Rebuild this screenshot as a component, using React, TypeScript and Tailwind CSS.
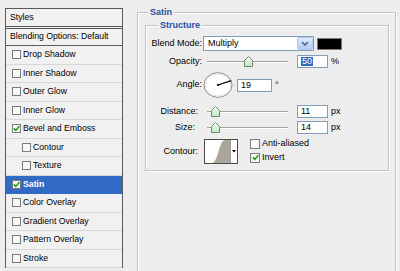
import React from 'react';

type Item = { label: string; checked?: boolean; indent?: boolean; selected?: boolean };

const items: Item[] = [
  { label: 'Drop Shadow' },
  { label: 'Inner Shadow' },
  { label: 'Outer Glow' },
  { label: 'Inner Glow' },
  { label: 'Bevel and Emboss', checked: true },
  { label: 'Contour', indent: true },
  { label: 'Texture', indent: true },
  { label: 'Satin', checked: true, selected: true },
  { label: 'Color Overlay' },
  { label: 'Gradient Overlay' },
  { label: 'Pattern Overlay' },
  { label: 'Stroke' },
];

function Check({ on, size = 'w-[9px] h-[9px]' }: { on?: boolean; size?: string }) {
  return (
    <span className={`${size} shrink-0 border border-[#7b7b7b] bg-[#f8f8f8] flex items-center justify-center`}>
      {on && (
        <svg width="7" height="7" viewBox="0 0 7 7">
          <path d="M0.8 3.4 L2.8 5.4 L6.3 1.2" fill="none" stroke="#1f9a1f" strokeWidth="1.6" />
        </svg>
      )}
    </span>
  );
}

function Thumb() {
  return (
    <svg width="9" height="11" viewBox="0 0 9 11">
      <defs>
        <linearGradient id="th" x1="0" y1="0" x2="0" y2="1">
          <stop offset="0" stopColor="#ffffff" />
          <stop offset="1" stopColor="#bfe6bf" />
        </linearGradient>
      </defs>
      <polygon points="0.5,4.5 4.5,0.5 8.5,4.5 8.5,10.5 0.5,10.5" fill="url(#th)" stroke="#6e8a6e" />
    </svg>
  );
}

function Track({ thumb }: { thumb: string }) {
  return (
    <div className="relative w-[81px] h-[13px] ml-[5px]">
      <div className="absolute left-0 right-0 top-[6px] h-[2px] border-t border-[#a4a4a4] bg-white" />
      <div className={`absolute top-[1px] ${thumb}`}>
        <Thumb />
      </div>
    </div>
  );
}

function Field({ children, w = 'w-[31px]' }: { children: React.ReactNode; w?: string }) {
  return (
    <div className={`${w} h-[13px] border border-[#7f9db9] bg-white flex items-center pl-[3px] leading-none`}>
      {children}
    </div>
  );
}

export default function App() {
  return (
    <div className="w-[400px] h-[271px] overflow-hidden bg-[#ededed] flex items-start font-['Liberation_Sans',Arial,sans-serif] text-black">
      {/* styles list */}
      <div className="ml-[5px] mt-[8px] w-[118px] flex flex-col border-x border-[#5a5a5a] bg-[#f1f1f1] text-[8.7px]">
        <div className="h-[19px] border-y border-[#5a5a5a] flex items-center pl-[4px]">Styles</div>
        <div className="mt-[1px] h-[18px] border-y border-[#5a5a5a] flex items-center pl-[4px]">
          Blending Options: Default
        </div>
        {items.map((it) => (
          <div
            key={it.label}
            className={`h-[18.5px] border-b flex items-center ${
              it.selected ? 'bg-[#316ac5] border-[#316ac5] text-white font-bold' : 'border-[#d7d7d7]'
            } ${it.indent ? 'pl-[16px]' : 'pl-[6px]'}`}
          >
            <Check on={it.checked} />
            <span className="ml-[2px]">{it.label}</span>
          </div>
        ))}
      </div>

      {/* Satin group */}
      <div className="relative ml-[14px] mt-[12px] w-[259px] h-[280px] border border-[#c2c2c2] shadow-[inset_1px_1px_0_#fff,1px_1px_0_#fff]">
        <span className="absolute left-[10px] top-[-7px] px-[2px] bg-[#ededed] text-[9px] leading-[12px] font-bold text-[#1f4fa3]">
          Satin
        </span>

        {/* Structure group */}
        <div className="relative ml-[7px] mt-[12px] w-[244px] h-[146px] border border-[#c2c2c2] shadow-[inset_1px_1px_0_#fff,1px_1px_0_#fff] text-[9px]">
          <span className="absolute left-[12px] top-[-7px] px-[2px] bg-[#ededed] text-[9px] leading-[12px] font-bold text-[#1f4fa3]">
            Structure
          </span>

          <div className="flex flex-col">
            {/* blend mode */}
            <div className="mt-[10px] h-[15px] flex items-center">
              <span className="w-[56px] text-right">Blend Mode:</span>
              <div className="ml-[1px] w-[111px] h-[15px] border border-[#7f9db9] bg-white flex items-center">
                <span className="flex-1 pl-[4px]">Multiply</span>
                <div className="w-[16px] h-[13px] rounded-[2px] border border-[#b3c6f0] bg-linear-to-b from-[#e0e9fd] to-[#b4c9f5] flex items-center justify-center">
                  <svg width="8" height="5" viewBox="0 0 8 5">
                    <path d="M1 1 L4 4 L7 1" fill="none" stroke="#4c5f86" strokeWidth="1.6" />
                  </svg>
                </div>
              </div>
              <div className="ml-[3px] w-[25px] h-[12px] bg-black border border-[#7a7a7a]" />
            </div>

            {/* opacity */}
            <div className="mt-[4px] h-[13px] flex items-center">
              <span className="w-[56px] text-right">Opacity:</span>
              <Track thumb="left-[37px]" />
              <div className="ml-[9px]">
                <Field>
                  <span className="bg-[#316ac5] text-white px-[1px]">50</span>
                </Field>
              </div>
              <span className="ml-[3px]">%</span>
            </div>

            {/* angle */}
            <div className="mt-[4px] h-[26px] flex items-center">
              <span className="w-[56px] text-right">Angle:</span>
              <svg className="ml-[1px]" width="30" height="26" viewBox="0 0 30 26">
                <ellipse cx="15" cy="13" rx="14" ry="12.3" fill="#ffffff" stroke="#8d8d8d" />
                <ellipse cx="15" cy="13" rx="12.8" ry="11.1" fill="none" stroke="#e4e4e4" />
                <line x1="15" y1="13" x2="28.2" y2="8.6" stroke="#000" strokeWidth="1.3" />
                <circle cx="15" cy="13" r="1.1" fill="#000" />
              </svg>
              <div className="ml-[4px]">
                <Field w="w-[35px]">19</Field>
              </div>
              <span className="ml-[3px] mt-[1px]">°</span>
            </div>

            {/* distance */}
            <div className="mt-[7px] h-[13px] flex items-center">
              <span className="w-[56px] text-right pr-[4px]">Distance:</span>
              <Track thumb="left-[4px]" />
              <div className="ml-[9px]">
                <Field>11</Field>
              </div>
              <span className="ml-[3px]">px</span>
            </div>

            {/* size */}
            <div className="mt-[3px] h-[13px] flex items-center">
              <span className="w-[56px] text-right pr-[7px]">Size:</span>
              <Track thumb="left-[4px]" />
              <div className="ml-[9px]">
                <Field>14</Field>
              </div>
              <span className="ml-[3px]">px</span>
            </div>

            {/* contour */}
            <div className="mt-[5px] h-[25px] flex items-center">
              <span className="w-[56px] text-right pr-[4px]">Contour:</span>
              <svg className="ml-[2px]" width="34" height="25" viewBox="0 0 34 25">
                <rect x="0.5" y="0.5" width="33" height="24" fill="#ffffff" stroke="#4a4a4a" />
                <path d="M8 24 C 14 24, 15 1, 21 1 L 26 1 L 26 24 Z" fill="#aaa69a" />
                <line x1="26.5" y1="1" x2="26.5" y2="24" stroke="#9a9a9a" />
                <polygon points="28,11 32,11 30,13.5" fill="#000" />
              </svg>
              <div className="ml-[12px] flex flex-col gap-[2px] -mt-[2px]">
                <div className="h-[12px] flex items-center">
                  <Check size="w-[10px] h-[10px]" />
                  <span className="ml-[2px]">Anti-aliased</span>
                </div>
                <div className="h-[12px] flex items-center">
                  <Check on size="w-[10px] h-[10px]" />
                  <span className="ml-[2px]">Invert</span>
                </div>
              </div>
            </div>
          </div>
        </div>
      </div>
    </div>
  );
}
